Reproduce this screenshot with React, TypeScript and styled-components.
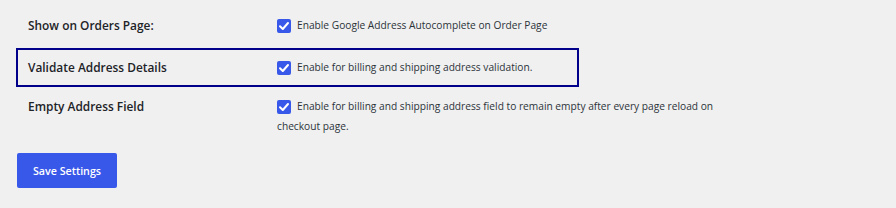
import React from "react";
import styled, { createGlobalStyle } from "styled-components";

const Global = createGlobalStyle`
  html, body { margin: 0; padding: 0; background: #f0f0f1; }
  body { font-family: "Open Sans", "Noto Sans", sans-serif; color: #1d2327; }
`;

const Page = styled.div`
  width: 896px;
  height: 208px;
  box-sizing: border-box;
  padding: 15px 0 0 16px;
  background: #f0f0f1;
`;

const Row = styled.div<{ $outlined?: boolean }>`
  display: grid;
  grid-template-columns: 249px 1fr;
  width: ${(p) => (p.$outlined ? "563px" : "720px")};
  box-sizing: border-box;
  padding: ${(p) => (p.$outlined ? "7px 10px 8px 10px" : "0 12px")};
  border: ${(p) => (p.$outlined ? "2px solid #00008b" : "none")};
  margin-bottom: ${(p) => (p.$outlined ? "9px" : "13px")};
`;

const Label = styled.div`
  font-size: 11.9px;
  font-weight: 600;
  line-height: 20px;
  color: #1d2327;
`;

const Desc = styled.div`
  font-size: 10.2px;
  line-height: 20px;
  color: #2c3338;
  max-width: 440px;
`;

const Box = styled.span`
  display: inline-flex;
  align-items: center;
  justify-content: center;
  width: 14px;
  height: 14px;
  border-radius: 2px;
  background: #3858e9;
  vertical-align: -3px;
  margin-right: 6px;
`;

const Button = styled.button`
  margin: 4px 0 0 1px;
  width: 100px;
  height: 35px;
  border: none;
  border-radius: 2px;
  background: #3858e9;
  color: #fff;
  font-family: "Open Sans", "Noto Sans", sans-serif;
  font-size: 10.7px;
  font-weight: 600;
  cursor: pointer;
`;

const Check = () => (
  <Box>
    <svg width="12" height="12" viewBox="0 0 12 12">
      <path d="M2 6.2 L4.8 9 L10 3" fill="none" stroke="#fff" strokeWidth="2" strokeLinecap="round" strokeLinejoin="round" />
    </svg>
  </Box>
);

const rows = [
  { label: "Show on Orders Page:", desc: "Enable Google Address Autocomplete on Order Page" },
  { label: "Validate Address Details", desc: "Enable for billing and shipping address validation.", outlined: true },
  {
    label: "Empty Address Field",
    desc: "Enable for billing and shipping address field to remain empty after every page reload on checkout page.",
  },
];

export default function App() {
  return (
    <Page>
      <Global />
      {rows.map((r) => (
        <Row key={r.label} $outlined={r.outlined}>
          <Label>{r.label}</Label>
          <Desc>
            <Check />
            {r.desc}
          </Desc>
        </Row>
      ))}
      <Button>Save Settings</Button>
    </Page>
  );
}
